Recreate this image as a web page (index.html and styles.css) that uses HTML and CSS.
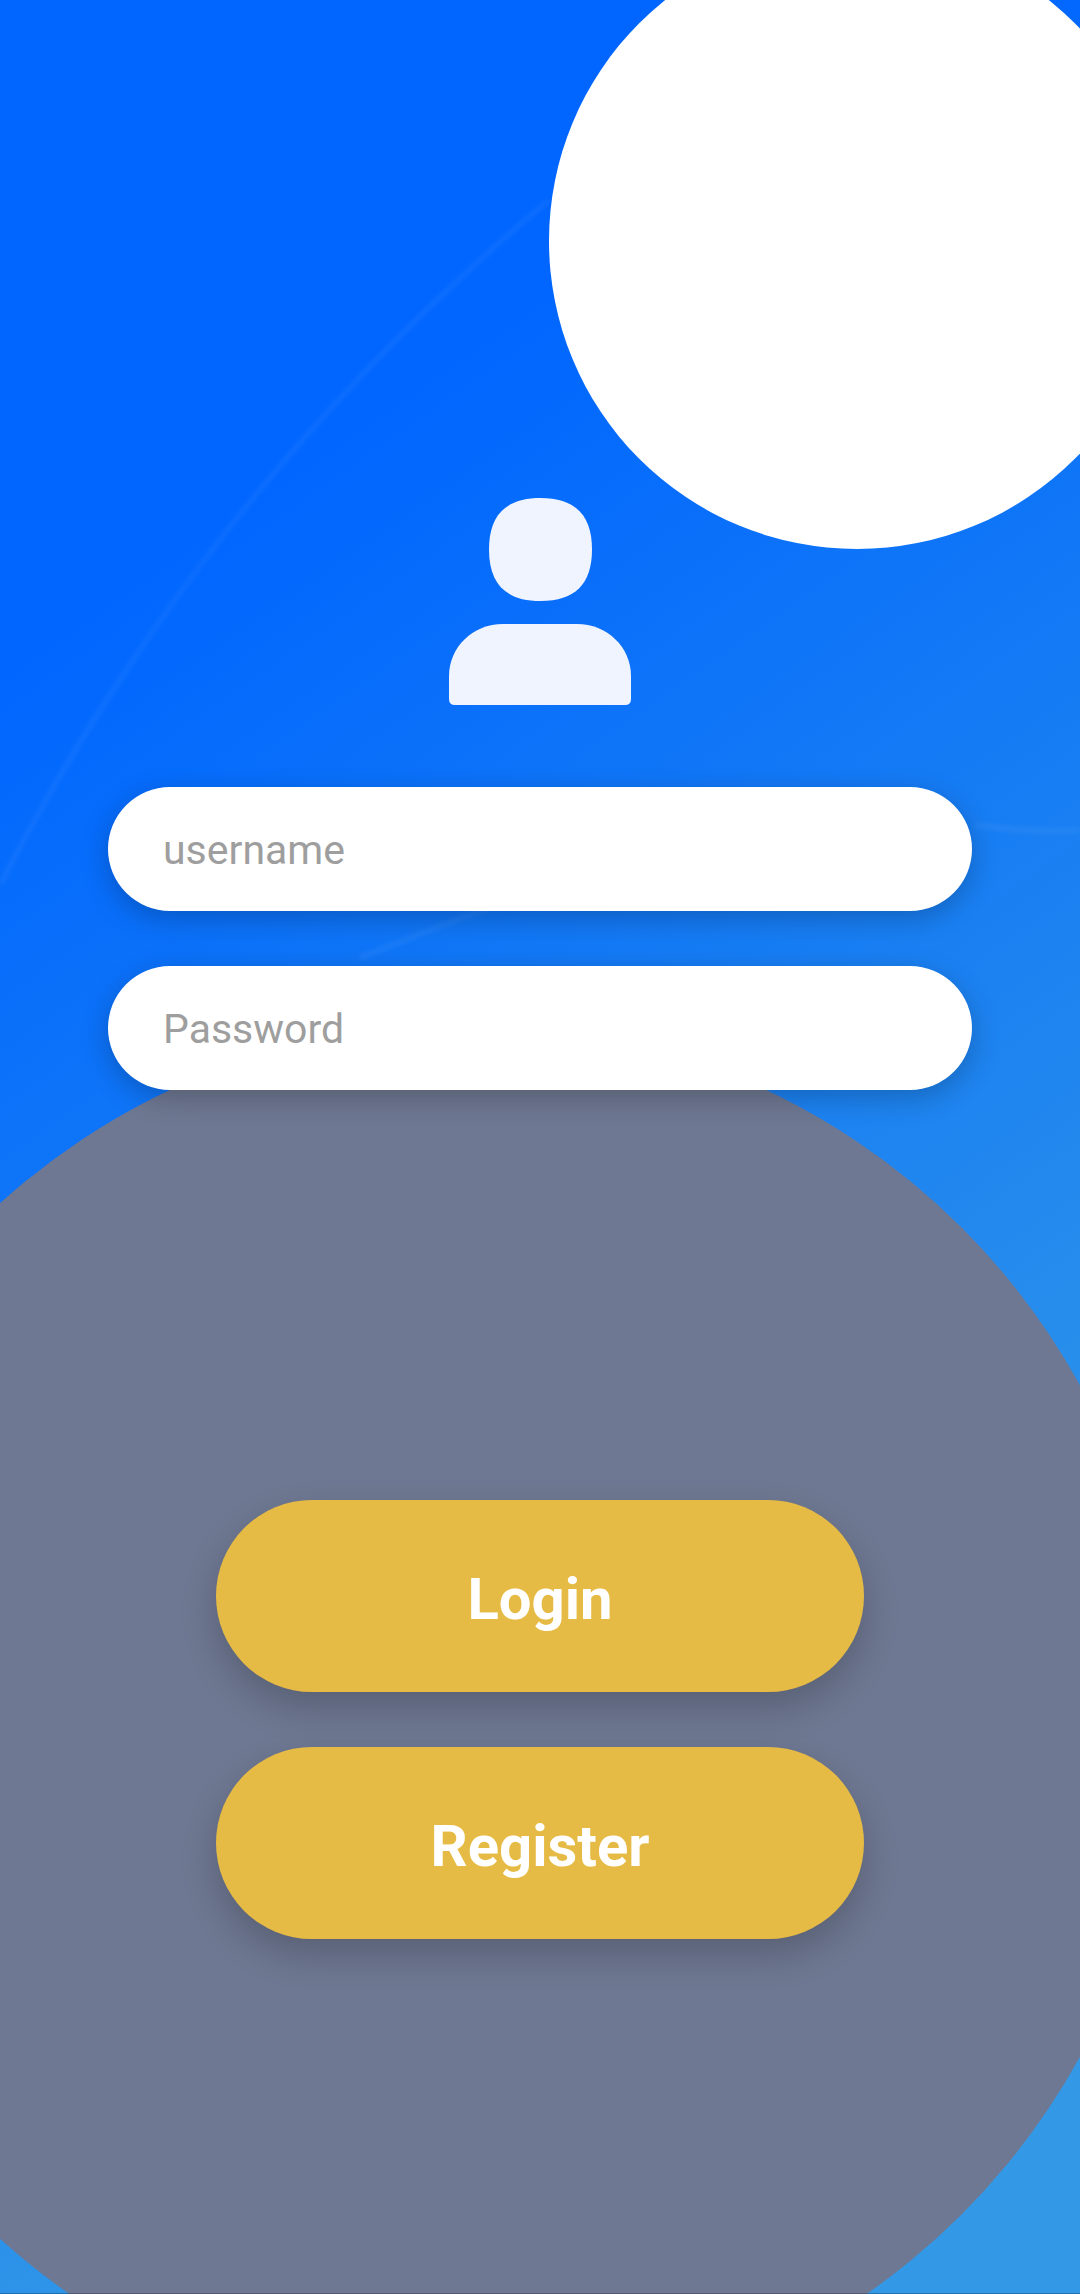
FILE: index.html
```html
<!DOCTYPE html>
<html lang="en">
<head>
    <meta charset="UTF-8">
    <meta name="viewport" content="width=device-width, initial-scale=1.0">
    <title>Login</title>
    <link rel="stylesheet" href="styles.css">
</head>
<body>
    <div class="screen">
        <div class="circle-top"></div>
        <div class="circle-bottom"></div>
        <svg class="streaks" viewBox="0 0 1080 2294">
            <path d="M0 885Q205 487 549 200"/>
            <path d="M360 958C400 942 440 925 490 908"/>
            <path d="M975 825C1010 830 1050 832 1080 830"/>
        </svg>

        <svg class="avatar" viewBox="0 0 182 207">
            <path d="M91.5 0C126 0 143 17 143 51.5C143 86 126 103 91.5 103C57 103 40 86 40 51.5C40 17 57 0 91.5 0Z"/>
            <path d="M54 126H128C158 126 182 149 182 178V201Q182 207 176 207H6Q0 207 0 201V178C0 149 24 126 54 126Z"/>
        </svg>

        <form class="login-form">
            <div class="fields">
                <input class="field" type="text" placeholder="username">
                <input class="field" type="password" placeholder="Password">
            </div>
            <div class="actions">
                <button class="btn" type="submit">Login</button>
                <button class="btn" type="button">Register</button>
            </div>
        </form>
    </div>
</body>
</html>
```

FILE: styles.css
```css
* {
    margin: 0;
    padding: 0;
    box-sizing: border-box;
}

body {
    font-family: 'Roboto', sans-serif;
}

.screen {
    position: relative;
    width: 1080px;
    height: 2294px;
    overflow: hidden;
    padding-top: 498px;
    display: flex;
    flex-direction: column;
    align-items: center;
    background: linear-gradient(145deg, #0066ff 22%, #3399e6 82%);
}

/* dark hairline along the bottom edge */
.screen::after {
    content: '';
    position: absolute;
    left: 0;
    right: 0;
    bottom: 0;
    height: 1px;
    background: rgba(0, 0, 0, 0.25);
}

.circle-top {
    position: absolute;
    left: 549px;
    top: -67px;
    width: 616px;
    height: 616px;
    border-radius: 50%;
    background: #fff;
}

.circle-bottom {
    position: absolute;
    left: -230px;
    top: 1023px;
    width: 1396px;
    height: 1396px;
    border-radius: 50%;
    background: #6f7892;
}

.streaks {
    position: absolute;
    left: 0;
    top: 0;
    width: 1080px;
    height: 2294px;
    fill: none;
    stroke: rgba(255, 255, 255, 0.05);
    stroke-width: 6;
    filter: blur(2px);
}

.avatar {
    position: relative;
    width: 182px;
    height: 207px;
    fill: #f0f4fe;
}

.login-form {
    position: relative;
    width: 864px;
    margin-top: 82px;
    display: flex;
    flex-direction: column;
    align-items: center;
}

.fields {
    width: 100%;
    display: flex;
    flex-direction: column;
    gap: 55px;
}

.field {
    width: 100%;
    height: 124px;
    padding: 2px 55px 0;
    border: none;
    border-radius: 62px;
    background: #fff;
    font-family: inherit;
    font-size: 41px;
    box-shadow: 0 8px 28px rgba(0, 0, 0, 0.22);
}

.field::placeholder {
    color: #9e9e9e;
    opacity: 1;
}

.actions {
    margin-top: 410px;
    width: 648px;
    display: flex;
    flex-direction: column;
    gap: 55px;
}

.btn {
    height: 192px;
    padding-top: 6px;
    border: none;
    border-radius: 96px;
    background: #e6bb45;
    color: #fff;
    font-family: inherit;
    font-size: 58px;
    font-weight: 700;
    box-shadow: 0 16px 36px rgba(0, 0, 0, 0.2);
}
```
